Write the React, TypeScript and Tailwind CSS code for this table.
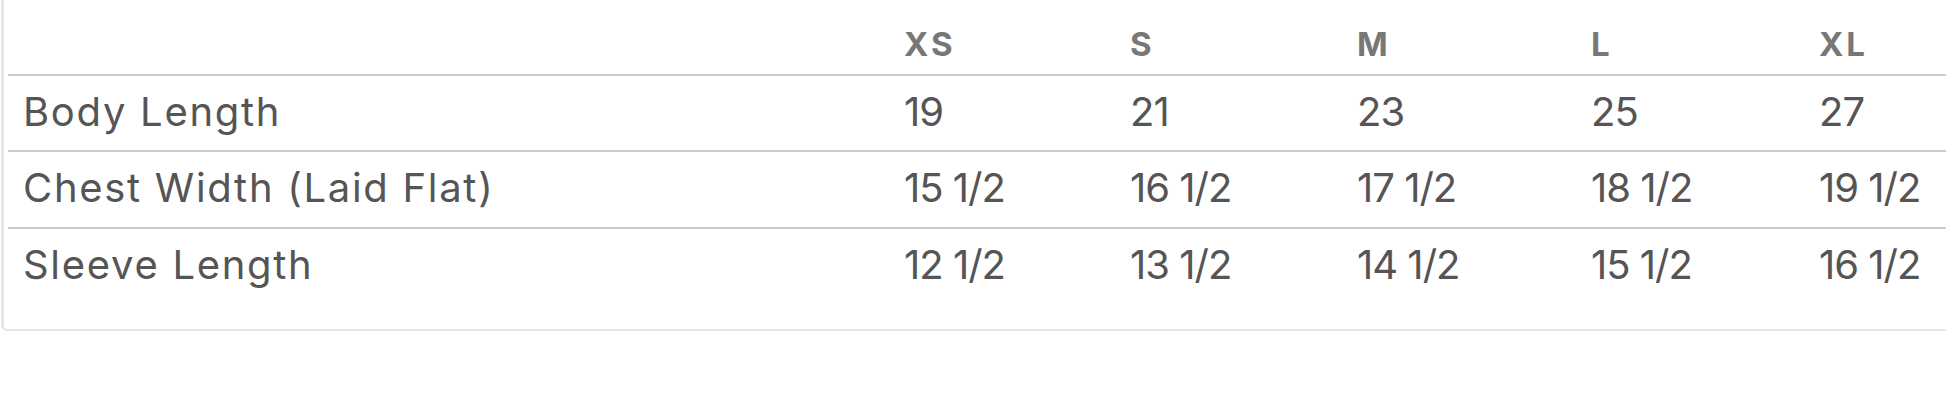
import React from "react";

const sizes = ["XS", "S", "M", "L", "XL"];
const rows: { label: string; values: string[] }[] = [
  { label: "Body Length", values: ["19", "21", "23", "25", "27"] },
  { label: "Chest Width (Laid Flat)", values: ["15 1/2", "16 1/2", "17 1/2", "18 1/2", "19 1/2"] },
  { label: "Sleeve Length", values: ["12 1/2", "13 1/2", "14 1/2", "15 1/2", "16 1/2"] },
];

const widths = ["w-[226px]", "w-[227px]", "w-[234px]", "w-[228px]", "w-[228px]"];

export default function App() {
  return (
    <div className="w-[1946px] h-[401px] overflow-hidden bg-white" style={{ fontFamily: "Inter, 'Noto Sans', sans-serif" }}>
      <div className="w-[2100px] ml-px border-l-[3px] border-b-2 border-r-2 border-[#e6e6e6] rounded-bl-[6px] pl-[4px] pb-[24px]">
        <div className="flex h-[76px] border-b-2 border-[#cbcbcb]">
          <div className="w-[896px] shrink-0" />
          {sizes.map((s, j) => (
            <div key={s} className={`${widths[j]} shrink-0 flex items-end pb-[13px]`}>
              <span className="text-[33px] leading-none font-bold tracking-[3px] text-[#777777]">{s}</span>
            </div>
          ))}
        </div>
        {rows.map((r, i) => (
          <div
            key={r.label}
            className={`flex ${i === 0 ? "h-[76px] border-b-2" : i === 1 ? "h-[77px] border-b-2" : "h-[76px]"} border-[#cbcbcb] items-start pt-[16px] text-[40px] leading-none text-[#555555]`}
          >
            <div className="w-[896px] shrink-0 pl-[15px] tracking-[1.7px]">{r.label}</div>
            {r.values.map((v, j) => (
              <div key={j} className={`${widths[j]} shrink-0 tracking-[-1px]`}>{v}</div>
            ))}
          </div>
        ))}
      </div>
    </div>
  );
}
